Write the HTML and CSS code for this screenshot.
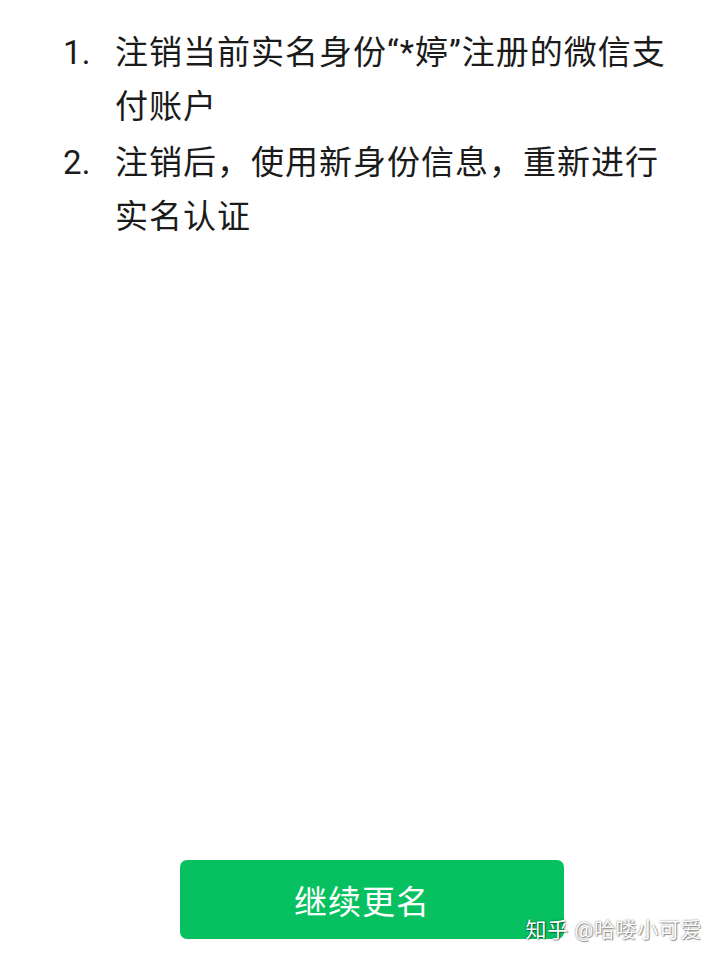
FILE: index.html
```html
<!DOCTYPE html>
<html lang="zh-CN">
<head>
    <meta charset="UTF-8">
    <meta name="viewport" content="width=device-width, initial-scale=1.0">
    <title>更改实名</title>
    <link rel="stylesheet" href="styles.css">
</head>
<body>

    <div class="page">
        <ol class="steps">
            <li class="step">
                <span class="step-num">1.</span>
                <span class="step-text">注销当前实名身份“*婷”注册的微信支付账户</span>
            </li>
            <li class="step">
                <span class="step-num">2.</span>
                <span class="step-text">注销后，使用新身份信息，重新进行实名认证</span>
            </li>
        </ol>

        <div class="actions">
            <button class="btn-primary">继续更名</button>
        </div>

        <div class="watermark">知乎 @哈喽小可爱</div>
    </div>

</body>
</html>
```

FILE: styles.css
```css
body {
    margin: 0;
    padding: 0;
    background-color: #ffffff;
    font-family: Roboto, "Noto Sans CJK SC", sans-serif;
    color: #1b1b1b;
}

/* Página inteira */
.page {
    position: relative;
    height: 960px;
    display: flex;
    flex-direction: column;
    box-sizing: border-box;
}

/* Lista de passos */
.steps {
    list-style: none;
    margin: 0;
    padding: 26px 46px 0 63px;
}

.step {
    display: flex;
    font-size: 33px;
    line-height: 54px;
    letter-spacing: 1px;
    margin-bottom: 2px;
}

.step-num {
    width: 52px;
    flex-shrink: 0;
    letter-spacing: 0.3px;
}

.step-text {
    flex: 1;
}

/* Botão no rodapé */
.actions {
    margin-top: auto;
    padding: 0 0 21px 180px;
}

.btn-primary {
    display: block;
    width: 384px;
    height: 79px;
    padding: 0 20px 0 0;
    border: none;
    border-radius: 7px;
    background-color: #07c160;
    color: #ffffff;
    font-family: Roboto, "Noto Sans CJK SC", sans-serif;
    font-size: 33px;
    letter-spacing: 1px;
    cursor: pointer;
}

/* Marca d'água */
.watermark {
    position: absolute;
    right: 18px;
    bottom: 18px;
    font-size: 21px;
    line-height: 24px;
    letter-spacing: 0.6px;
    color: #ffffff;
    text-shadow: 0 0 2px rgba(0, 0, 0, 0.55), 1px 1px 1px rgba(0, 0, 0, 0.35);
}
```
